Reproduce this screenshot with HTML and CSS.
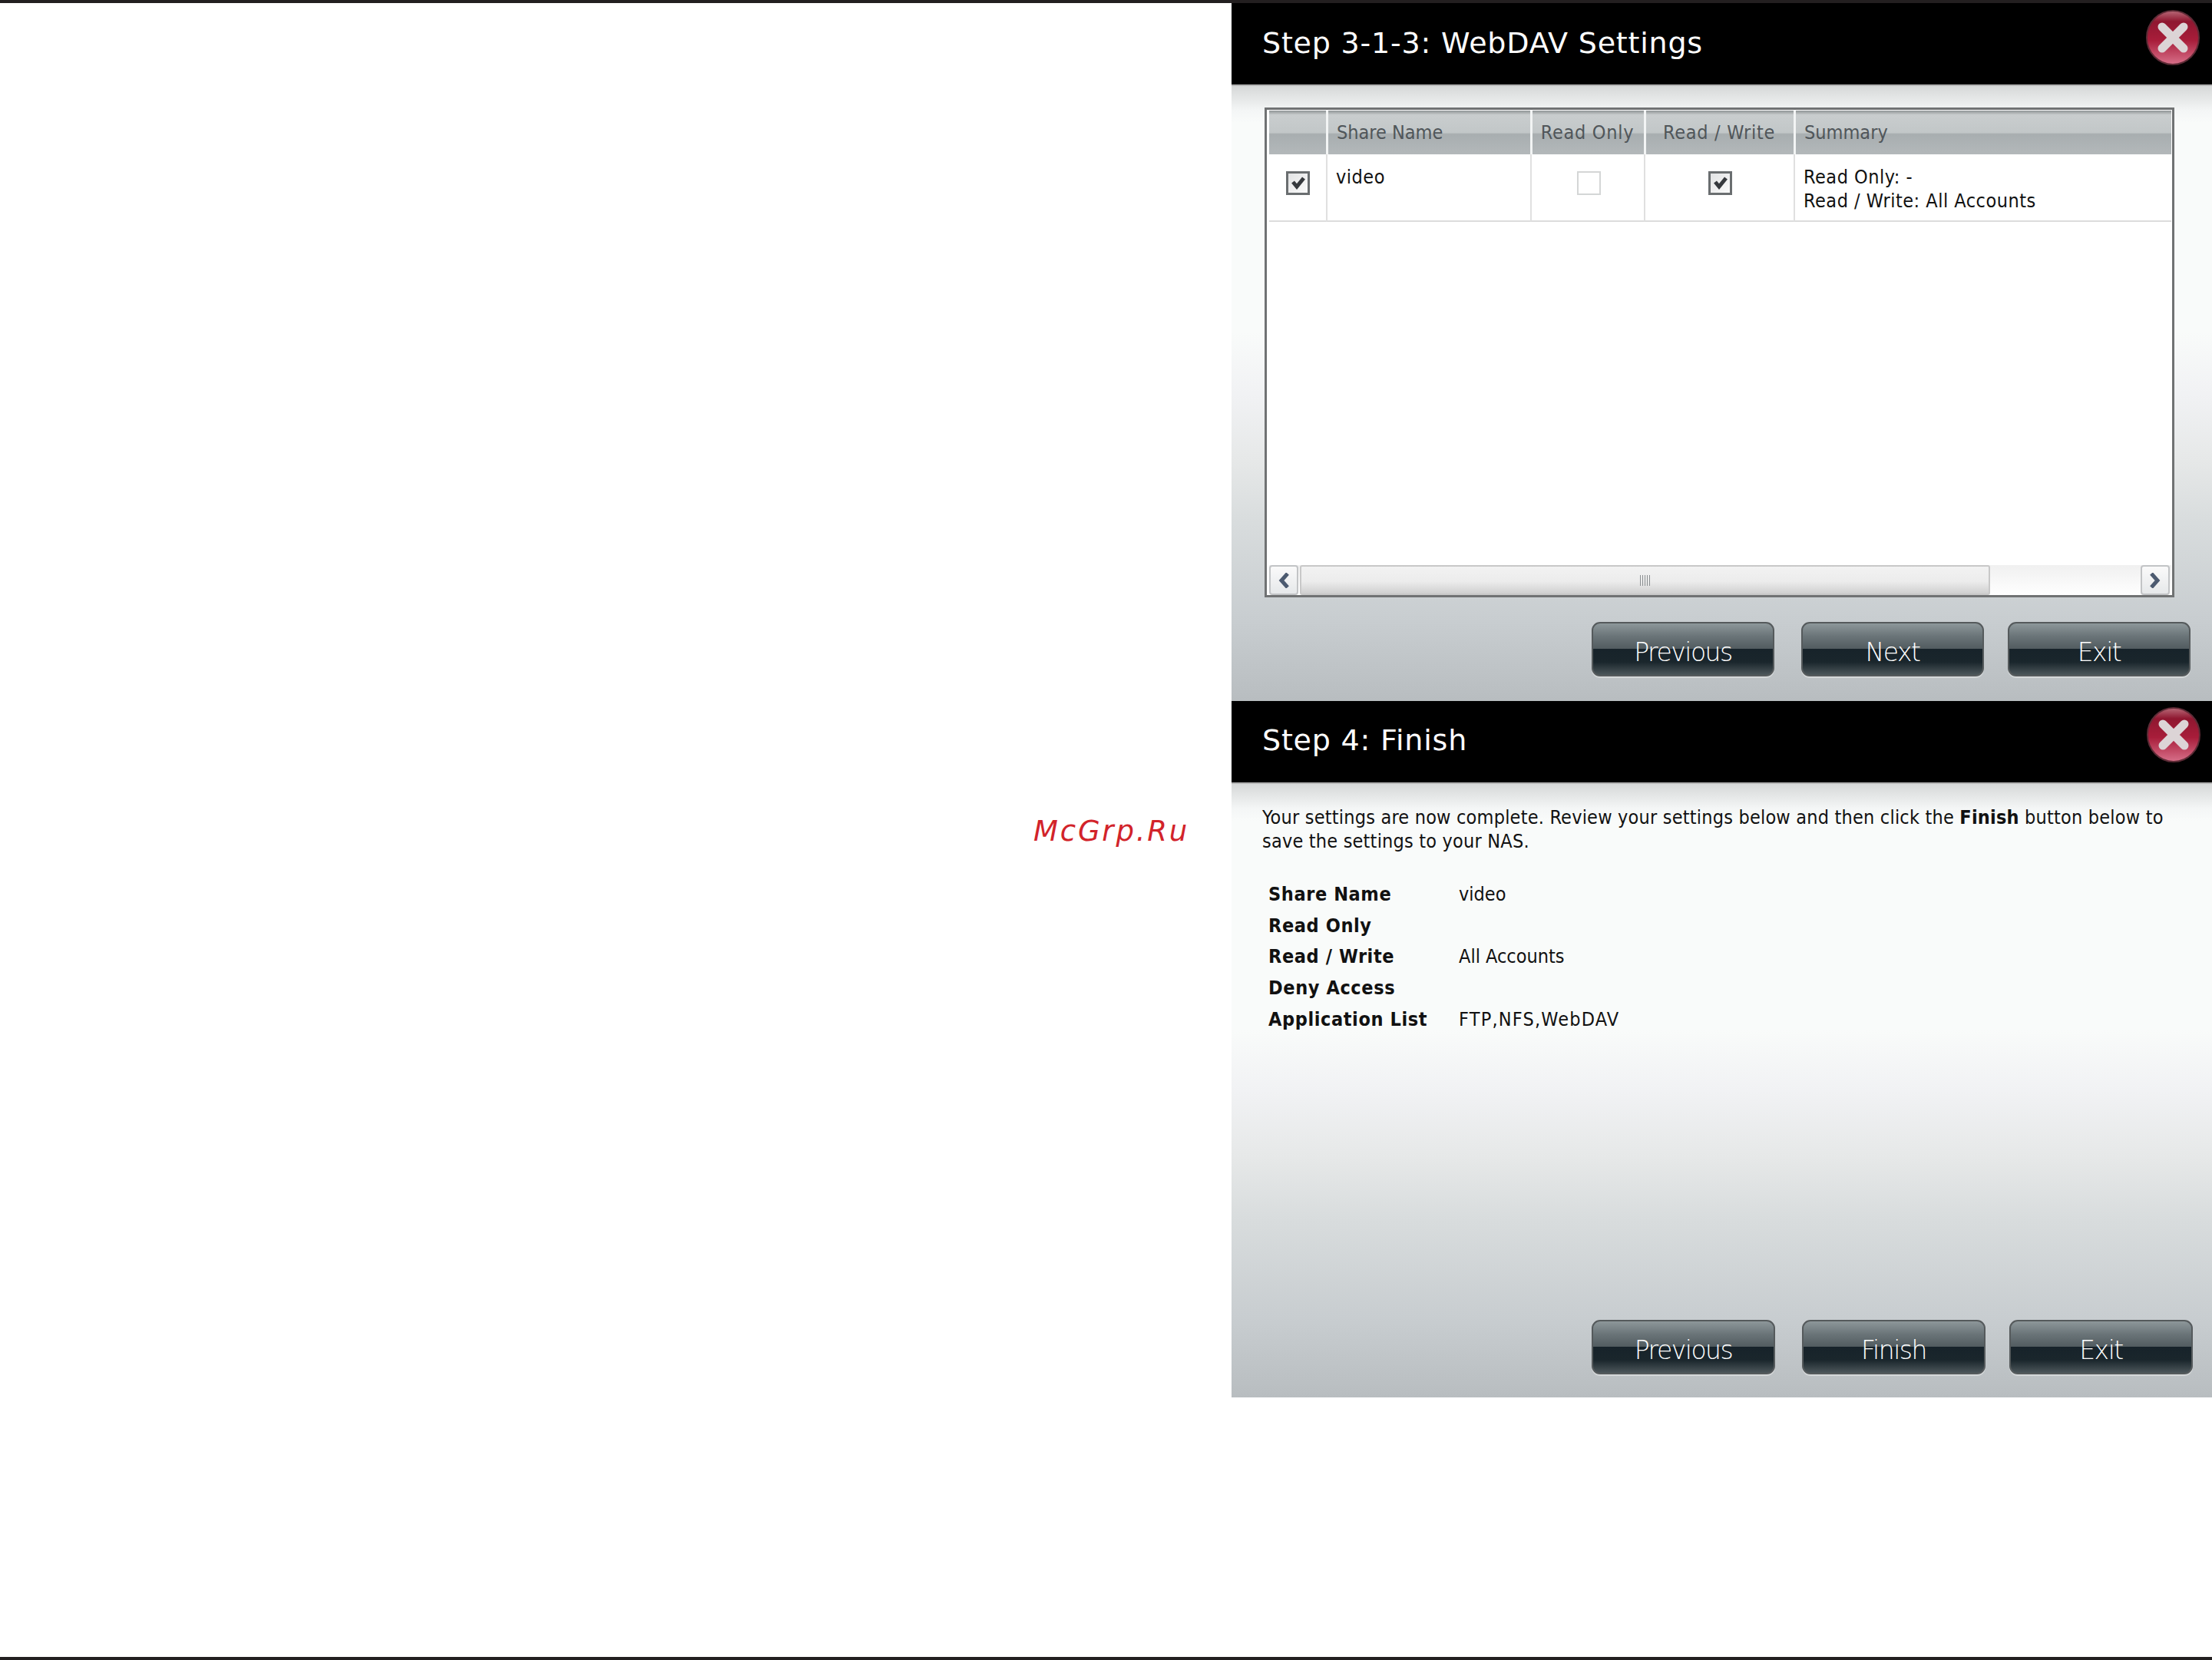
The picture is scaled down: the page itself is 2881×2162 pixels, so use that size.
FILE: index.html
```html
<!DOCTYPE html>
<html lang="en">
<head>
<meta charset="utf-8">
<title>WebDAV Settings</title>
<link rel="stylesheet" href="styles.css">
</head>
<body>
<div class="rule"></div>
<main class="page">
  <aside class="mark"><span>McGrp.Ru</span></aside>
  <div class="wizard">
    <section class="panel panel-a">
      <header class="head">
        <h1>Step 3-1-3: WebDAV Settings</h1>
        <svg class="close" viewBox="0 0 70 72"><defs><linearGradient id="g1" x1="0" y1="0" x2="0" y2="1"><stop offset="0" stop-color="#b86a78"/><stop offset=".2" stop-color="#8f1730"/><stop offset=".55" stop-color="#a81d3a"/><stop offset="1" stop-color="#d8708a"/></linearGradient></defs><ellipse cx="35" cy="36" rx="34" ry="35" fill="url(#g1)" stroke="#5e2b36" stroke-width="2"/><path d="M21 22 49 50M49 22 21 50" stroke="#dcd4d6" stroke-width="11" stroke-linecap="round"/></svg>
      </header>
      <div class="body">
        <div class="grid-frame">
          <table class="grid">
            <colgroup><col class="c1"><col class="c2"><col class="c3"><col class="c4"><col class="c5"></colgroup>
            <thead><tr><th></th><th>Share Name</th><th class="mid">Read Only</th><th class="mid">Read / Write</th><th>Summary</th></tr></thead>
            <tbody><tr>
              <td class="box"><span class="check on"><svg viewBox="0 0 25 25"><path d="M6 11 11 17 20 6" fill="none" stroke="#36393d" stroke-width="5"/></svg></span></td>
              <td>video</td>
              <td class="box box-mid"><span class="check"></span></td>
              <td class="box box-mid"><span class="check on"><svg viewBox="0 0 25 25"><path d="M6 11 11 17 20 6" fill="none" stroke="#36393d" stroke-width="5"/></svg></span></td>
              <td>Read Only: -<br>Read / Write: All Accounts</td>
            </tr></tbody>
          </table>
          <div class="scroll">
            <span class="arrow"><svg viewBox="0 0 14 20"><path d="M12 1 4 10 12 19" fill="none" stroke="#4c5a70" stroke-width="5"/></svg></span>
            <span class="thumb"><i></i><i></i><i></i><i></i><i></i></span>
            <span class="arrow arrow-end"><svg viewBox="0 0 14 20"><path d="M2 1 10 10 2 19" fill="none" stroke="#4c5a70" stroke-width="5"/></svg></span>
          </div>
        </div>
        <div class="actions">
          <button class="btn">Previous</button><button class="btn">Next</button><button class="btn btn-exit">Exit</button>
        </div>
      </div>
    </section>
    <section class="panel panel-b">
      <header class="head">
        <h1>Step 4: Finish</h1>
        <svg class="close" viewBox="0 0 70 72"><ellipse cx="35" cy="36" rx="34" ry="35" fill="url(#g1)" stroke="#5e2b36" stroke-width="2"/><path d="M21 22 49 50M49 22 21 50" stroke="#dcd4d6" stroke-width="11" stroke-linecap="round"/></svg>
      </header>
      <div class="body">
        <p class="intro">Your settings are now complete. Review your settings below and then click the <b>Finish</b> button below to save the settings to your NAS.</p>
        <dl class="facts">
          <dt>Share Name</dt><dd>video</dd>
          <dt>Read Only</dt><dd></dd>
          <dt>Read / Write</dt><dd>All Accounts</dd>
          <dt>Deny Access</dt><dd></dd>
          <dt>Application List</dt><dd class="apps">FTP,NFS,WebDAV</dd>
        </dl>
        <div class="actions">
          <button class="btn">Previous</button><button class="btn">Finish</button><button class="btn btn-exit">Exit</button>
        </div>
      </div>
    </section>
  </div>
</main>
<div class="rule rule-end"></div>
</body>
</html>
```
FILE: styles.css
```css
* { box-sizing: border-box; }
html, body { margin: 0; padding: 0; }
body {
  width: 2881px;
  height: 2162px;
  overflow: hidden;
  background: #fff;
  display: flex;
  flex-direction: column;
  font-family: "DejaVu Sans", sans-serif;
  font-stretch: condensed;
  font-size: 25px;
  color: #111;
}
.rule { height: 4px; background: #231f20; flex: none; }
.rule-end { margin-top: auto; }
.page { display: flex; flex: none; }
.mark { width: 1604px; padding: 1057px 55px 0 0; text-align: right; }
.mark span {
  font-style: italic;
  font-stretch: normal;
  font-size: 37px;
  letter-spacing: 2.8px;
  color: #d2232a;
  line-height: 44px;
}
.wizard { width: 1277px; display: flex; flex-direction: column; }
.panel { display: flex; flex-direction: column; }
.panel-a { height: 909px; }
.panel-b { height: 907px; }
.head {
  height: 108px;
  flex: none;
  background: #000;
  border-bottom: 2px solid #b4b4b4;
  display: flex;
  align-items: flex-start;
  justify-content: space-between;
  padding: 9px 16px 0 40px;
}
.panel-b .head { padding-top: 8px; padding-right: 15px; }
.head h1 {
  margin: 21px 0 0;
  font-size: 38px;
  font-stretch: normal;
  letter-spacing: .8px;
  line-height: 44px;
  font-weight: normal;
  color: #fff;
  white-space: nowrap;
}
.close { width: 70px; height: 72px; flex: none; }
.body {
  flex: 1;
  display: flex;
  flex-direction: column;
  background: linear-gradient(#d6d8d8 0, #f4f6f6 4%, #f9fbfa 6%, #f9fbfa 40%, #f1f2f4 50%, #e6e8e8 61%, #d8dcdd 71%, #c8cdd0 87%, #b8bdc0 100%);
}
.grid-frame {
  margin: 28px 49px 0 43px;
  height: 638px;
  background: #fff;
  border: 3px solid #707273;
  padding: 1px 1px 0 3px;
  display: flex;
  flex-direction: column;
}
.grid {
  width: 100%;
  border-collapse: separate;
  border-spacing: 0;
  table-layout: fixed;
  margin-bottom: auto;
}
.c1 { width: 74px; }
.c2 { width: 266px; }
.c3 { width: 148px; }
.c4 { width: 195px; }
.grid th {
  height: 57px;
  padding: 0 11px;
  text-align: left;
  font-weight: normal;
  color: #50565a;
  border-left: 3px solid #f2f4f4;
  background: linear-gradient(#8f9495 0, #c9cdce 10%, #c2c7c8 50%, #a8aeb0 54%, #b3b8ba 100%);
  white-space: nowrap;
}
.grid th:first-child { border-left: 0; }
.grid th.mid { text-align: center; padding: 0 2px 0 0; letter-spacing: .7px; }
.grid td {
  height: 88px;
  padding: 14px 11px 0;
  vertical-align: top;
  line-height: 31px;
  letter-spacing: .5px;
  border-left: 2px solid #e0e0e0;
  border-bottom: 2px solid #dcdcdc;
  white-space: nowrap;
}
.grid td:first-child { border-left: 0; }
.grid td.box { padding: 22px 0 0; text-align: center; }
.grid td.box-mid { padding-left: 2px; }
.check {
  display: inline-block;
  width: 31px;
  height: 31px;
  border: 2px solid #d4d6d6;
  background: #fff;
  vertical-align: top;
}
.check.on { border: 3px solid #6a6e70; background: linear-gradient(135deg, #e2e3e4, #fafafa); }
.check svg { display: block; width: 25px; height: 25px; }
.scroll {
  height: 39px;
  flex: none;
  display: flex;
  background: linear-gradient(#f0f0f0, #fff);
}
.arrow {
  width: 38px;
  flex: none;
  border: 2px solid #c2c4c6;
  border-radius: 4px;
  background: linear-gradient(#fafafa, #e6e8ea);
  display: flex;
  align-items: center;
  justify-content: center;
}
.arrow svg { width: 14px; height: 20px; }
.arrow-end { margin-left: auto; margin-right: 2px; }
.thumb {
  width: 899px;
  margin-left: 2px;
  flex: none;
  display: flex;
  align-items: center;
  justify-content: center;
  gap: 2px;
  border: 2px solid #c8c8c8;
  border-radius: 3px;
  background: linear-gradient(#f2f2f2, #ececec 55%, #d0d0d0);
}
.thumb i { width: 1px; height: 14px; background: #8a8e90; }
.actions {
  margin-top: auto;
  display: flex;
  justify-content: flex-end;
  gap: 35px;
  padding: 0 28px 32px 0;
}
.panel-b .actions { padding-right: 25px; padding-bottom: 30px; }
.btn {
  width: 238px;
  height: 71px;
  padding: 8px 0 0;
  border: 2px solid #555a5c;
  border-radius: 11px;
  color: #fff;
  font: 200 33px "DejaVu Sans", sans-serif;
  font-stretch: condensed;
  letter-spacing: -1.5px;
  background: linear-gradient(#8d979a 0, #6a7478 25%, #525c60 49%, #17232a 50%, #1a262c 75%, #4c565a 100%);
  box-shadow: 0 2px 0 #d5d8d9;
}
.panel-b .btn { width: 239px; }
.btn-exit { margin-left: -4px; }
.intro {
  margin: 0;
  padding: 28px 30px 0 40px;
  line-height: 31px;
  letter-spacing: .2px;
}
.intro b { font-weight: bold; }
.facts {
  margin: 33.5px 0 0 48px;
  display: grid;
  grid-template-columns: 248px 1fr;
  grid-auto-rows: 40.6px;
  align-items: center;
}
.facts dt { font-weight: bold; letter-spacing: .6px; }
.facts dd { margin: 0; }
.facts .apps { letter-spacing: 1.2px; }
```
